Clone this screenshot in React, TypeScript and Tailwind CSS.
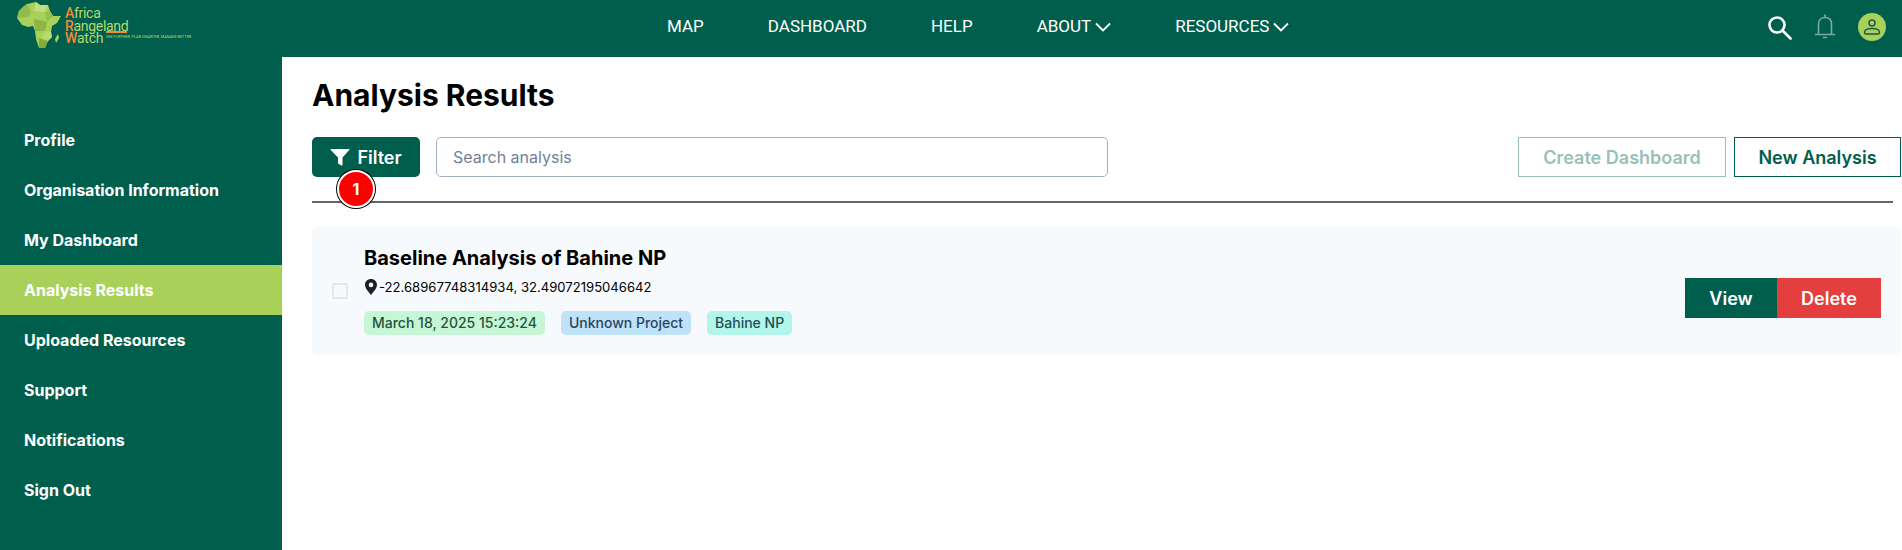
const sideItems = [
    "Profile",
    "Organisation Information",
    "My Dashboard",
    "Analysis Results",
    "Uploaded Resources",
    "Support",
    "Notifications",
    "Sign Out",
];

const Logo = () => (
    <div className="flex items-start h-[57px] w-[282px] pl-[17px] font-['Roboto',sans-serif]">
        <svg width="44" height="47" viewBox="0 0 44 47" className="mt-[2px] shrink-0">
            <path
                d="M10 2 L19 0 L23 3 L31 3 L33 9 L36 14 L44 14 L40 21 L35 24 L34 30 L35 35 L31 39 L28 46 L22 46 L19 37 L18 29 L16 24 L11 25 L5 23 L0 16 L2 9 L6 5 Z"
                fill="#a9d15a"
            />
            <path d="M0 16 L2 9 L6 5 L10 2 L14 9 L12 15 Z" fill="#8fbc4a" />
            <path d="M19 0 L23 3 L31 3 L28 10 L17 9 Z" fill="#c0df7c" />
            <path d="M28 10 L33 9 L36 14 L30 20 Z" fill="#93bf4c" />
            <path d="M17 17 L30 20 L28 29 L18 29 Z" fill="#8db544" />
            <path d="M22 36 L31 39 L28 46 L22 46 Z" fill="#7fae3f" />
            <path d="M28 29 L34 30 L35 35 L31 39 L25 36 Z" fill="#b6d970" />
            <path d="M41 32 L42 36 L39 41 L38 37 Z" fill="#a9d15a" />
        </svg>
        <div className="mt-[7px] ml-[4px] text-[#b5d96b] text-[14px] leading-[12.5px] tracking-[-0.3px] w-[100px] shrink-0">
            <div><span className="text-[#f08a3c] font-medium">A</span>frica</div>
            <div><span className="text-[#f08a3c] font-medium">R</span>angeland</div>
            <div className="flex">
                <span><span className="text-[#f08a3c] font-medium">W</span>atch</span>
                <div className="ml-[3px] -mt-[1px]">
                    <div className="h-[2px] w-[21px] bg-[#f08a3c] mb-[1px]" />
                    <div className="text-[3.8px] leading-[6px] tracking-normal whitespace-nowrap">SEE FURTHER, PLAN SMARTER, MANAGE BETTER</div>
                </div>
            </div>
        </div>
    </div>
);

const Chevron = () => (
    <svg width="16" height="10" viewBox="0 0 16 10" fill="none" stroke="white" strokeWidth="1.8" className="ml-[4px]">
        <path d="M1 1.5 L8 8.5 L15 1.5" />
    </svg>
);

const SearchIcon = () => (
    <svg width="25" height="25" viewBox="0 0 25 25" fill="none" stroke="white" strokeWidth="2.6" className="mr-[23px]">
        <circle cx="10" cy="10" r="7.5" />
        <path d="M15.5 15.5 L23.5 23.5" strokeLinecap="round" />
    </svg>
);

const BellIcon = () => (
    <svg width="20" height="26" viewBox="0 0 20 26" fill="none" stroke="#7fa9a0" strokeWidth="1.6" className="mr-[23px]">
        <path d="M3.5 20 V10 C3.5 6 6 3.5 10 3.5 C14 3.5 16.5 6 16.5 10 V20" />
        <path d="M0.5 20.5 H19.5" strokeLinecap="round" />
        <path d="M10 1 V3" strokeLinecap="round" />
        <path d="M8.5 23.5 H11.5" strokeLinecap="round" />
    </svg>
);

const UserIcon = () => (
    <svg width="20" height="20" viewBox="0 0 20 20" fill="none" stroke="#1d5a48" strokeWidth="1.5">
        <circle cx="10" cy="6" r="3" />
        <path d="M2.5 15.5 C2.5 12.5 6 11.5 10 11.5 C14 11.5 17.5 12.5 17.5 15.5 C17.5 16.5 17 17 16 17 H4 C3 17 2.5 16.5 2.5 15.5 Z" />
    </svg>
);

const FilterIcon = () => (
    <svg width="20" height="20" viewBox="0 0 20 20" fill="white">
        <path d="M1 2 H19 C19.5 2 19.6 2.5 19.3 2.9 L12.5 10.5 V18 C12.5 18.6 12 18.9 11.5 18.6 L8 16.5 V10.5 L0.7 2.9 C0.4 2.5 0.5 2 1 2 Z" />
    </svg>
);

const PinIcon = () => (
    <svg width="14" height="16" viewBox="0 0 14 16" className="mr-[1px] shrink-0">
        <path
            fillRule="evenodd"
            d="M7 0 C10.5 0 13 2.6 13 5.8 C13 9.5 9 13.5 7 16 C5 13.5 1 9.5 1 5.8 C1 2.6 3.5 0 7 0 Z M7 3.6 A2.3 2.3 0 1 0 7 8.2 A2.3 2.3 0 1 0 7 3.6 Z"
            fill="#1a202c"
        />
    </svg>
);

const Header = () => (
    <header className="h-[57px] bg-[#005e4d] flex items-center text-white shrink-0">
        <Logo />
        <nav className="flex items-center gap-[64px] ml-[385px] font-['Roboto',sans-serif] text-[17px] text-white -mt-[3px]">
            <a>MAP</a>
            <a>DASHBOARD</a>
            <a>HELP</a>
            <a className="flex items-center">ABOUT<Chevron /></a>
            <a className="flex items-center">RESOURCES<Chevron /></a>
        </nav>
        <div className="ml-auto flex items-center mr-[16px] -mt-[3px]">
            <SearchIcon />
            <BellIcon />
            <div className="w-[28px] h-[28px] rounded-full bg-[#a9d15a] flex items-center justify-center">
                <UserIcon />
            </div>
        </div>
    </header>
);

const Sidebar = () => (
    <aside className="w-[282px] bg-[#005e4d] pt-[58px] shrink-0">
        {sideItems.map((item) => (
            <div
                key={item}
                className={`h-[50px] pl-[24px] flex items-center text-[16px] font-bold text-white ${item === "Analysis Results" ? "bg-[#a9d15a]" : ""}`}
            >
                {item}
            </div>
        ))}
    </aside>
);

const App = () => {
    return (
        <div className="h-[550px] w-[1902px] overflow-hidden flex flex-col bg-white font-['Inter',sans-serif]">
            <Header />
            <div className="flex flex-1">
                <Sidebar />
                <main className="flex-1 pl-[30px] pt-[20px] min-w-0">
                    <h1 className="text-[30px] leading-[36px] font-bold text-black">Analysis Results</h1>
                    <div className="flex items-center mt-[24px]">
                        <div className="relative">
                            <button className="h-[40px] w-[108px] rounded-[5px] bg-[#005e4d] text-white font-semibold text-[18px] flex items-center justify-center gap-[7px]">
                                <FilterIcon />
                                Filter
                            </button>
                            <div className="absolute left-[25px] top-[33px] w-[38px] h-[38px] rounded-full bg-[#ff0000] border-2 border-white ring-1 ring-black text-white font-bold text-[16px] flex items-center justify-center">
                                1
                            </div>
                        </div>
                        <input
                            placeholder="Search analysis"
                            className="ml-[16px] h-[40px] w-[672px] rounded-[5px] border border-[#a0aec0] px-[16px] text-[16px] placeholder:text-[#718096] outline-none"
                        />
                        <button className="ml-auto h-[40px] w-[208px] border border-[#99c0b8] text-[#99c0b8] font-semibold text-[18px]">
                            Create Dashboard
                        </button>
                        <button className="ml-[8px] mr-[1px] h-[40px] w-[167px] border border-[#005e4d] text-[#005e4d] font-semibold text-[18px]">
                            New Analysis
                        </button>
                    </div>
                    <div className="mt-[24px] h-[2px] mr-[9px] bg-[#666666]" />
                    <div className="mt-[24px] mr-[1px] h-[128px] rounded-[5px] bg-[#f7fafc] flex items-center pl-[20px] pr-[20px]">
                        <div className="w-[16px] h-[16px] rounded-[2px] border-2 border-[#e2e8f0]" />
                        <div className="ml-[16px] -mt-[3px]">
                            <div className="text-[20px] leading-[28px] font-bold text-black">Baseline Analysis of Bahine NP</div>
                            <div className="flex items-center mt-[7px] text-[13.1px] leading-[16px] text-black">
                                <PinIcon />
                                -22.68967748314934, 32.49072195046642
                            </div>
                            <div className="flex items-center gap-[16px] mt-[16px] text-[14px] leading-[24px] font-medium">
                                <span className="px-[8px] rounded-[5px] bg-[#c6f6d5] text-[#22543d]">March 18, 2025 15:23:24</span>
                                <span className="px-[8px] rounded-[5px] bg-[#bee3f8] text-[#2a4365]">Unknown Project</span>
                                <span className="px-[8px] rounded-[5px] bg-[#b2f5ea] text-[#234e52]">Bahine NP</span>
                            </div>
                        </div>
                        <div className="ml-auto flex mt-[14px]">
                            <button className="h-[40px] w-[92px] bg-[#005e4d] text-white font-semibold text-[18px]">View</button>
                            <button className="h-[40px] w-[104px] bg-[#e53e3e] text-white font-semibold text-[18px]">Delete</button>
                        </div>
                    </div>
                </main>
            </div>
        </div>
    );
};

export default App;
